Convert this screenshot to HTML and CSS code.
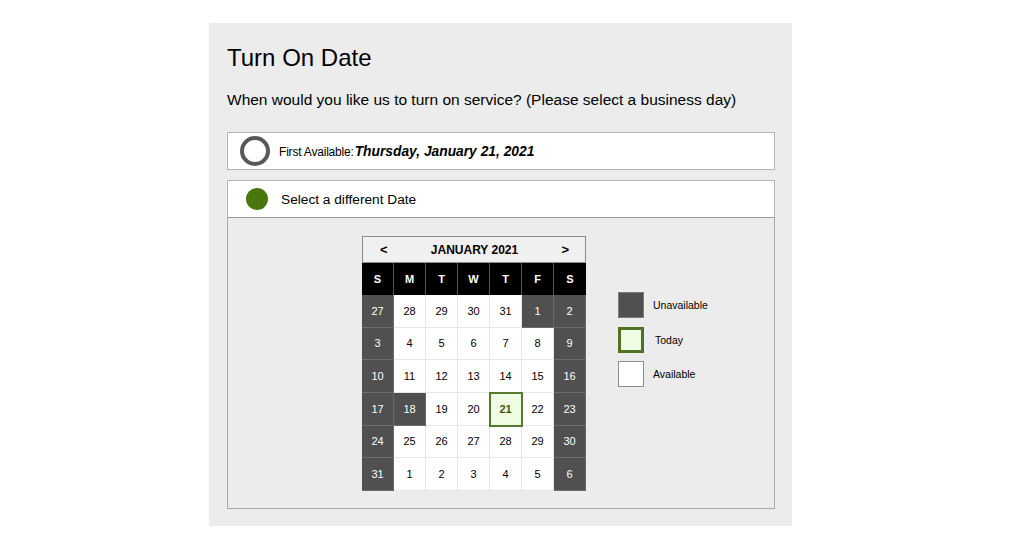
FILE: index.html
```html
<!DOCTYPE html>
<html lang="en">
<head>
<meta charset="utf-8">
<title>Turn On Date</title>
<link rel="stylesheet" href="styles.css">
</head>
<body>
<div class="panel">
  <h1 class="title">Turn On Date</h1>
  <p class="question">When would you like us to turn on service? (Please select a business day)</p>

  <div class="option option-first">
    <span class="radio radio-ring"></span>
    <span class="first-label">First Available:</span><span class="first-date">Thursday, January 21, 2021</span>
  </div>

  <div class="option option-select">
    <span class="radio radio-dot"></span>
    <span class="select-label">Select a different Date</span>
  </div>

  <div class="cal-area">
    <div class="calendar">
      <div class="cal-head">
        <span class="nav">&lt;</span>
        <span class="month">JANUARY 2021</span>
        <span class="nav">&gt;</span>
      </div>
      <div class="dow">
        <span>S</span><span>M</span><span>T</span><span>W</span><span>T</span><span>F</span><span>S</span>
      </div>
      <div class="days">
        <span class="d off">27</span><span class="d">28</span><span class="d">29</span><span class="d">30</span><span class="d">31</span><span class="d off">1</span><span class="d off">2</span>
        <span class="d off">3</span><span class="d">4</span><span class="d">5</span><span class="d">6</span><span class="d">7</span><span class="d">8</span><span class="d off">9</span>
        <span class="d off">10</span><span class="d">11</span><span class="d">12</span><span class="d">13</span><span class="d">14</span><span class="d">15</span><span class="d off">16</span>
        <span class="d off">17</span><span class="d off">18</span><span class="d">19</span><span class="d">20</span><span class="d today">21</span><span class="d">22</span><span class="d off">23</span>
        <span class="d off">24</span><span class="d">25</span><span class="d">26</span><span class="d">27</span><span class="d">28</span><span class="d">29</span><span class="d off">30</span>
        <span class="d off">31</span><span class="d">1</span><span class="d">2</span><span class="d">3</span><span class="d">4</span><span class="d">5</span><span class="d off">6</span>
      </div>
    </div>

    <div class="legend">
      <div class="leg-item"><span class="sw sw-off"></span><span class="leg-text">Unavailable</span></div>
      <div class="leg-item"><span class="sw sw-today"></span><span class="leg-text leg-today">Today</span></div>
      <div class="leg-item"><span class="sw sw-avail"></span><span class="leg-text">Available</span></div>
    </div>
  </div>
</div>
</body>
</html>
```

FILE: styles.css
```css
* { box-sizing: border-box; }

body {
  margin: 0;
  background: #ffffff;
  font-family: "Liberation Sans", Arial, sans-serif;
  color: #000;
}

.panel {
  margin: 23px 0 0 209px;
  width: 583px;
  background: #ececec;
  padding: 21px 17px 17px 18px;
}

.title {
  margin: 0;
  font-size: 24px;
  line-height: 28px;
  font-weight: normal;
}

.question {
  margin: 18px 0 0;
  font-size: 15.5px;
  line-height: 20px;
}

.option {
  display: flex;
  align-items: center;
  height: 38px;
  background: #ffffff;
  border: 1px solid #b4b4b4;
}

.option-first {
  margin-top: 22px;
  padding-left: 12px;
}

.option-select {
  margin-top: 10px;
  padding-left: 18px;
  border-bottom-color: #9a9a9a;
}

.radio {
  flex: none;
  border-radius: 50%;
}

.radio-ring {
  width: 30px;
  height: 30px;
  border: 4.5px solid #585858;
  background: #fff;
  margin-right: 9px;
}

.radio-dot {
  width: 22px;
  height: 22px;
  background: #4a760e;
  margin-right: 13px;
}

.first-label {
  font-size: 12px;
  letter-spacing: -0.2px;
  position: relative;
  top: 1px;
  margin-right: 1px;
}

.first-date {
  font-size: 13.8px;
  font-weight: bold;
  font-style: italic;
}

.select-label {
  font-size: 13.7px;
}

.cal-area {
  display: flex;
  align-items: flex-start;
  background: #ececec;
  border: 1px solid #aaaaaa;
  border-top: none;
  padding: 18px 0 17px 134px;
}

.calendar {
  width: 224px;
}

.cal-head {
  display: flex;
  align-items: center;
  justify-content: space-between;
  height: 27px;
  background: #f0f0f0;
  border: 1px solid #8a8a8a;
  padding: 0 16px 0 17px;
  font-size: 12px;
  font-weight: bold;
}

.nav {
  font-size: 13px;
  font-weight: bold;
}

.dow {
  display: grid;
  grid-template-columns: repeat(7, 1fr);
  height: 32px;
  background: #000;
}

.dow span {
  display: flex;
  align-items: center;
  justify-content: center;
  color: #fff;
  font-size: 11px;
  font-weight: bold;
  border-right: 1px solid #555;
}

.dow span:last-child { border-right: none; }

.days {
  display: grid;
  grid-template-columns: repeat(7, 1fr);
  grid-template-rows: repeat(6, 1fr);
  height: 196px;
}

.d {
  display: flex;
  align-items: center;
  justify-content: center;
  background: #ffffff;
  font-size: 11px;
  border-right: 1px solid #e6e6e6;
  border-bottom: 1px solid #e6e6e6;
}

.d.off {
  background: #505050;
  color: #ffffff;
  border-right-color: #686868;
  border-bottom-color: #6c6c6c;
}

.d.today {
  position: relative;
  z-index: 1;
  background: #effbe3;
  color: #3a5a12;
  font-weight: bold;
  outline: 2px solid #557a2c;
  outline-offset: -1px;
}

.legend {
  margin: 56px 0 0 32px;
  display: flex;
  flex-direction: column;
  gap: 8.5px;
}

.leg-item {
  display: flex;
  align-items: center;
}

.sw {
  flex: none;
  width: 26px;
  height: 26px;
}

.sw-off {
  background: #505050;
  border: 1px solid #7a7a7a;
}

.sw-today {
  background: #effce3;
  border: 3px solid #4e7323;
}

.sw-avail {
  background: #ffffff;
  border: 1px solid #8e8e8e;
}

.leg-text {
  margin-left: 9px;
  font-size: 10.5px;
}

.leg-today {
  margin-left: 11px;
}
```
